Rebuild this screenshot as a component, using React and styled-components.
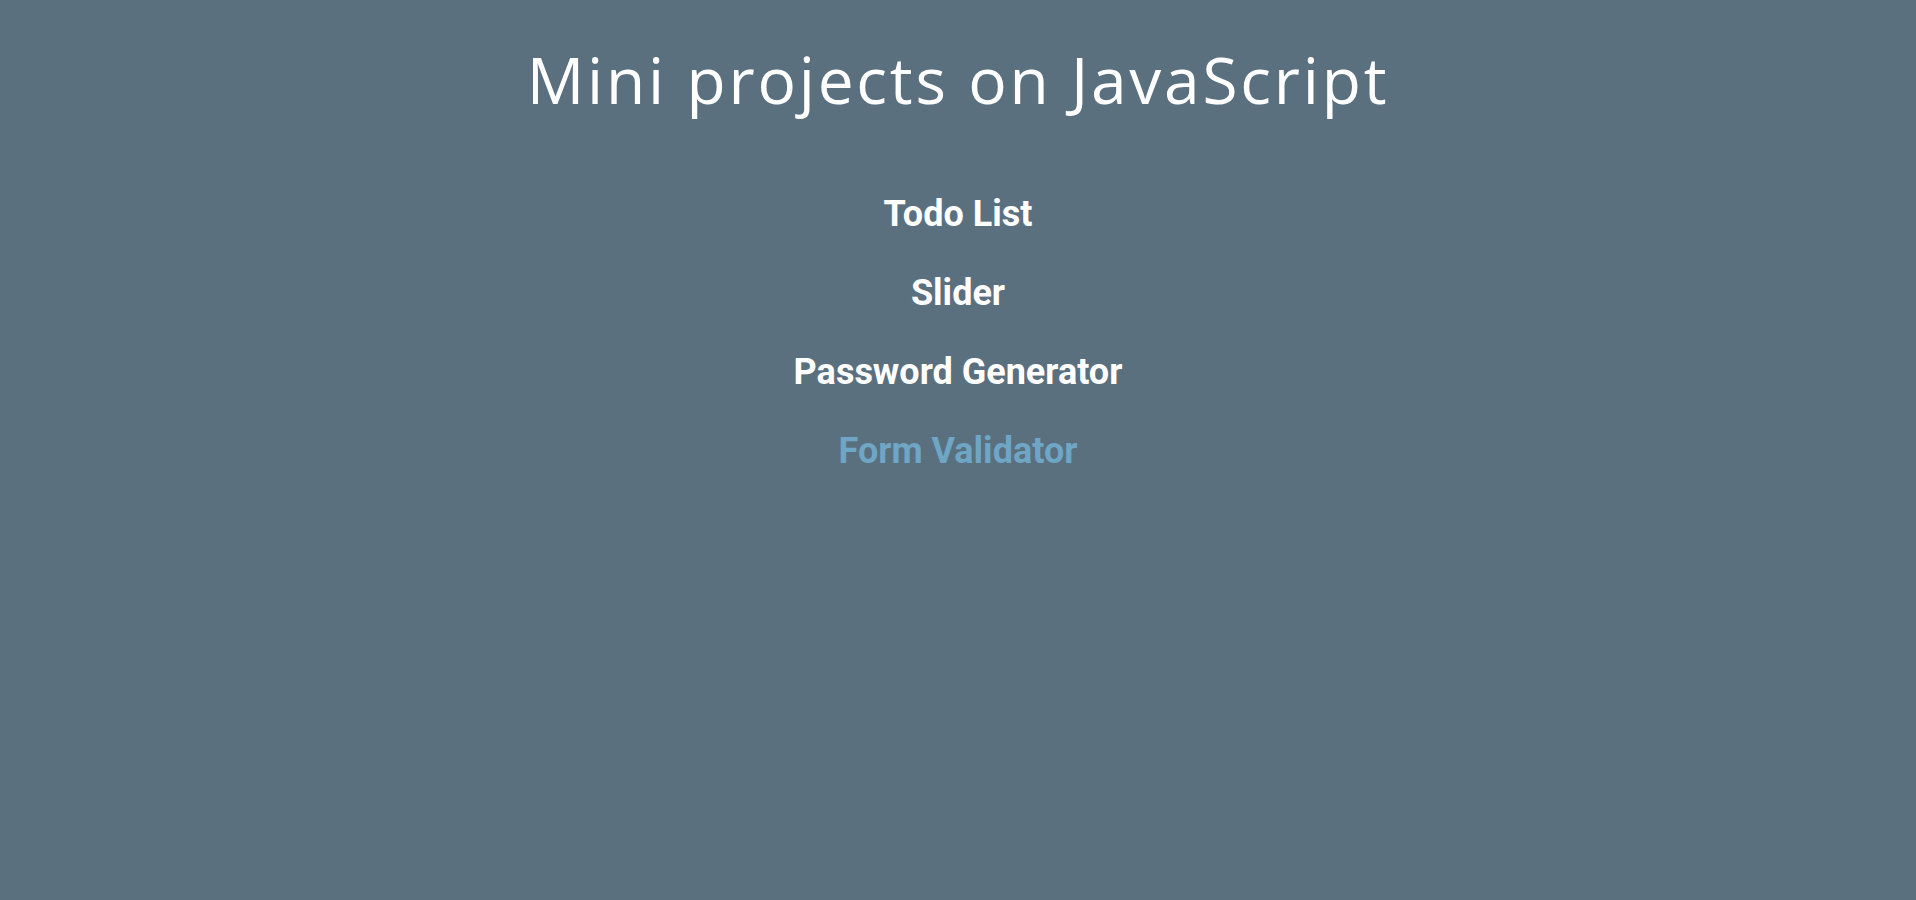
import styled, { createGlobalStyle } from "styled-components";

const GlobalStyle = createGlobalStyle`
  html, body {
    margin: 0;
    padding: 0;
    background-color: #5a707f;
    min-height: 100%;
  }
  body {
    font-family: Roboto, "Liberation Sans", sans-serif;
  }
`;

const Page = styled.div`
  min-height: 900px;
  display: flex;
  flex-direction: column;
  align-items: center;
`;

const Title = styled.h1`
  font-family: "Open Sans", "Liberation Sans", sans-serif;
  font-weight: 400;
  font-size: 64px;
  line-height: 1;
  color: #fff;
  margin: 48px 0 0;
  letter-spacing: 2.8px;
`;

const Projects = styled.ul`
  list-style: none;
  margin: 82px 0 0;
  padding: 0;
  display: flex;
  flex-direction: column;
  align-items: center;
  gap: 39px;
`;

const ProjectLink = styled.a`
  display: block;
  font-family: Roboto, "Liberation Sans", sans-serif;
  font-weight: 700;
  font-size: 36px;
  line-height: 40px;
  text-decoration: none;
  color: ${(p) => (p.$active ? "#6fa5c5" : "#fff")};
`;

const projects = [
  { name: "Todo List", to: "todo-list" },
  { name: "Slider", to: "slider" },
  { name: "Password Generator", to: "password-generator" },
  { name: "Form Validator", to: "form-validator", active: true },
];

export default function App() {
  return (
    <>
      <GlobalStyle />
      <Page>
        <Title>Mini projects on JavaScript</Title>
        <Projects>
          {projects.map((_project) => (
            <li key={_project.to}>
              <ProjectLink href={`#${_project.to}`} $active={_project.active}>
                {_project.name}
              </ProjectLink>
            </li>
          ))}
        </Projects>
      </Page>
    </>
  );
}
